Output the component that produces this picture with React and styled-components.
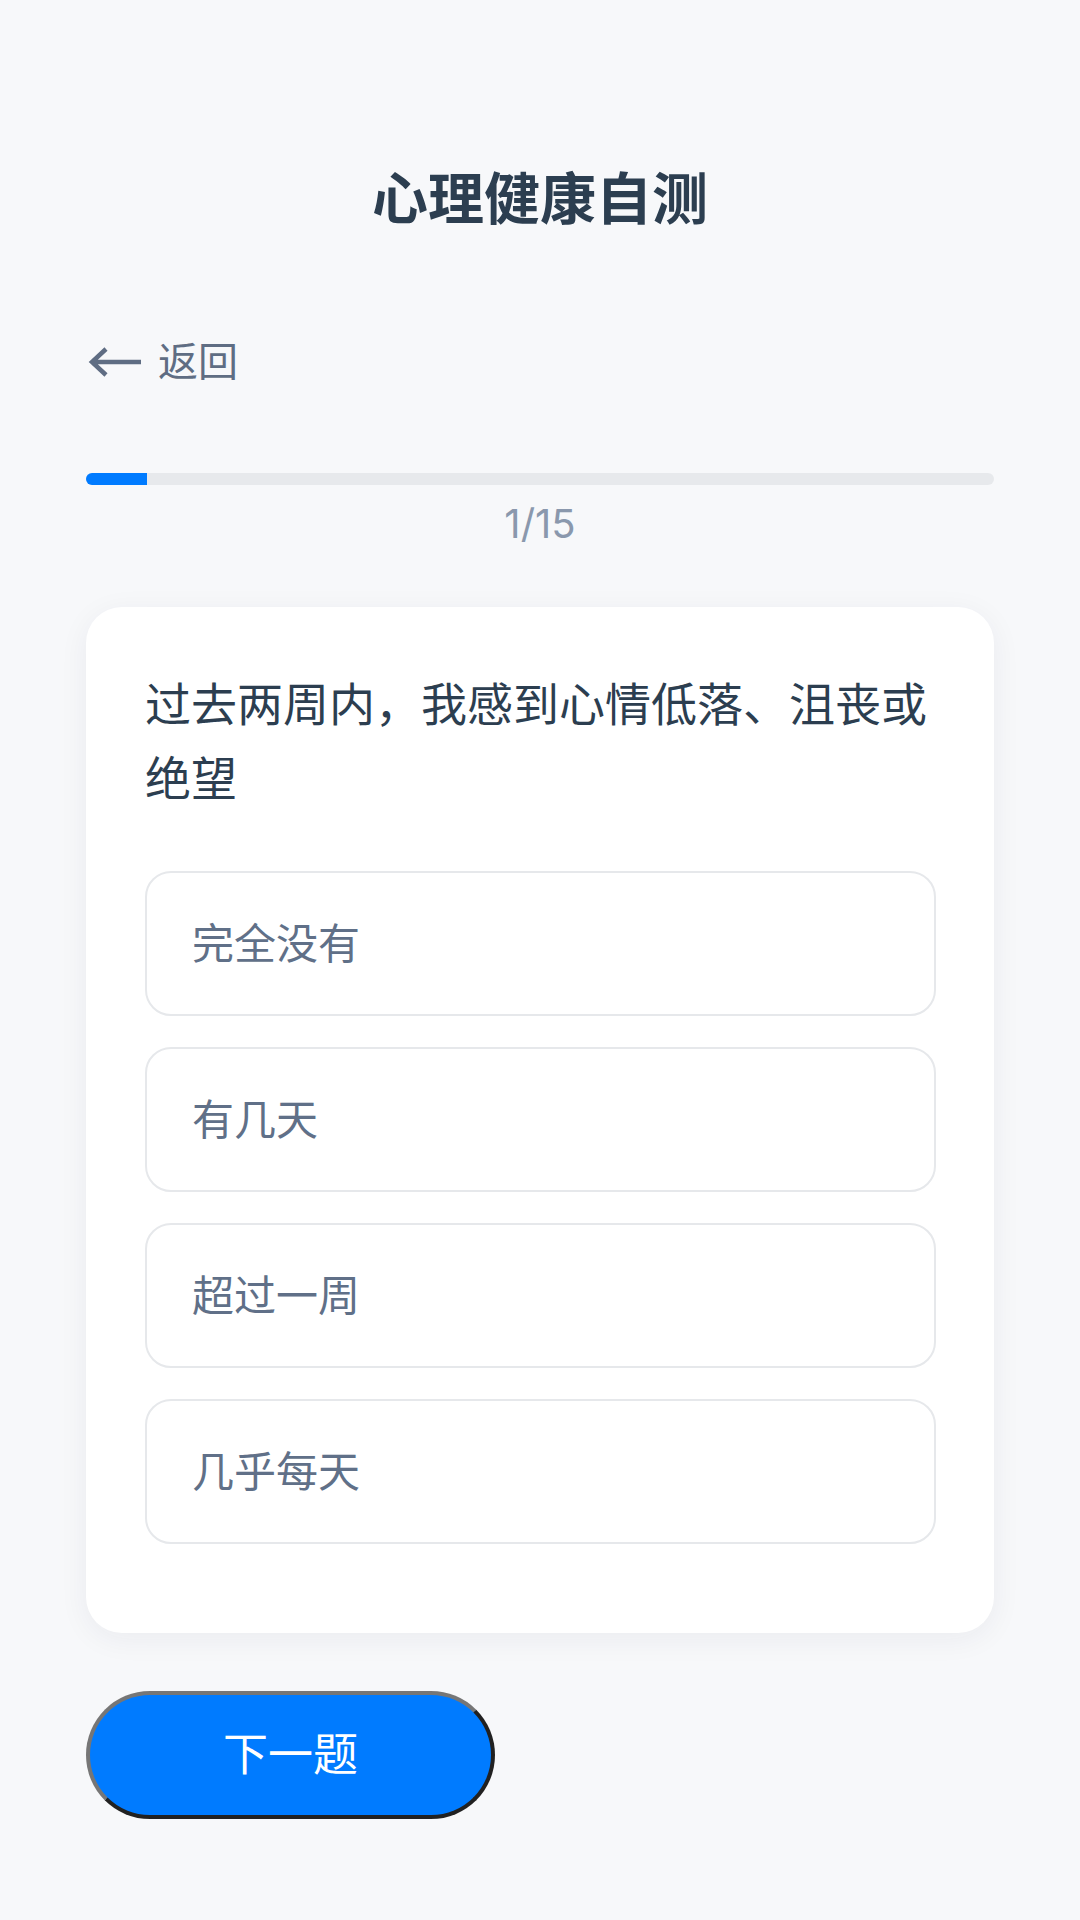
import React, { useState } from 'react';
import styled, { createGlobalStyle } from 'styled-components';

const GlobalStyle = createGlobalStyle`
  html, body {
    margin: 0;
    padding: 0;
    background: #f7f8fa;
  }
  body {
    font-family: Inter, "Noto Sans CJK SC", sans-serif;
  }
  * {
    box-sizing: border-box;
  }
`;

const options = ['完全没有', '有几天', '超过一周', '几乎每天'];

const App = () => {
  const [selected, setSelected] = useState(null);
  const current = 1;
  const total = 15;

  return (
    <Page>
      <GlobalStyle />
      <Title>心理健康自测</Title>
      <BackLink type='button'>
        <svg width='54' height='30' viewBox='0 0 54 30' fill='none'>
          <path
            d='M4 15 H53 M18 2 L4 15 L18 28'
            stroke='#5f6d83'
            strokeWidth='4.5'
          />
        </svg>
        <span>返回</span>
      </BackLink>

      <Progress>
        <Track>
          <Fill style={{ width: `${(current / total) * 100}%` }} />
        </Track>
        <Count>
          {current}/{total}
        </Count>
      </Progress>

      <Card>
        <Question>过去两周内，我感到心情低落、沮丧或绝望</Question>
        {options.map((text, i) => (
          <Option
            key={text}
            $active={selected === i}
            onClick={() => setSelected(i)}
          >
            {text}
          </Option>
        ))}
      </Card>

      <NextButton type='button'>下一题</NextButton>
    </Page>
  );
};

const Page = styled.div`
  min-height: 1920px;
  padding: 160px 86px 80px;
  display: flex;
  flex-direction: column;
  align-items: stretch;
`;

const Title = styled.h1`
  margin: 0;
  text-align: center;
  font-size: 56px;
  line-height: 78px;
  font-weight: 700;
  color: #2c3e50;
`;

const BackLink = styled.button`
  margin-top: 94px;
  align-self: flex-start;
  display: flex;
  align-items: center;
  gap: 16px;
  padding: 0 0 0 2px;
  border: none;
  background: transparent;
  font-family: inherit;
  font-size: 40px;
  line-height: 60px;
  color: #5f6d83;
  cursor: pointer;

  svg {
    display: block;
  }
`;

const Progress = styled.div`
  margin-top: 81px;
  display: flex;
  flex-direction: column;
`;

const Track = styled.div`
  height: 12px;
  border-radius: 6px;
  background: #e7e9ec;
  overflow: hidden;
`;

const Fill = styled.div`
  height: 100%;
  background: #007bff;
`;

const Count = styled.div`
  margin-top: 12px;
  text-align: center;
  font-size: 40px;
  line-height: 54px;
  color: #8a98ad;
`;

const Card = styled.div`
  margin-top: 56px;
  background: #ffffff;
  border-radius: 36px;
  padding: 60px 58px 58px 59px;
  box-shadow: 0 6px 30px rgba(30, 40, 60, 0.06);
`;

const Question = styled.p`
  margin: 0 0 56px;
  font-size: 46px;
  line-height: 74px;
  color: #2c3e50;
`;

const Option = styled.div`
  margin-bottom: 31px;
  border: 2px solid ${(p) => (p.$active ? '#007bff' : '#e6e8eb')};
  border-radius: 26px;
  padding: 37px 44px 37px 45px;
  font-size: 42px;
  line-height: 67px;
  color: #607088;
  background: #ffffff;
  cursor: pointer;
`;

const NextButton = styled.button`
  margin-top: 58px;
  align-self: flex-start;
  width: 409px;
  height: 128px;
  border: 4px outset rgb(118, 118, 118);
  border-radius: 64px;
  background: #007bff;
  color: #ffffff;
  font-family: inherit;
  font-size: 45px;
  line-height: 64px;
  padding: 0;
  cursor: pointer;
`;

export default App;
